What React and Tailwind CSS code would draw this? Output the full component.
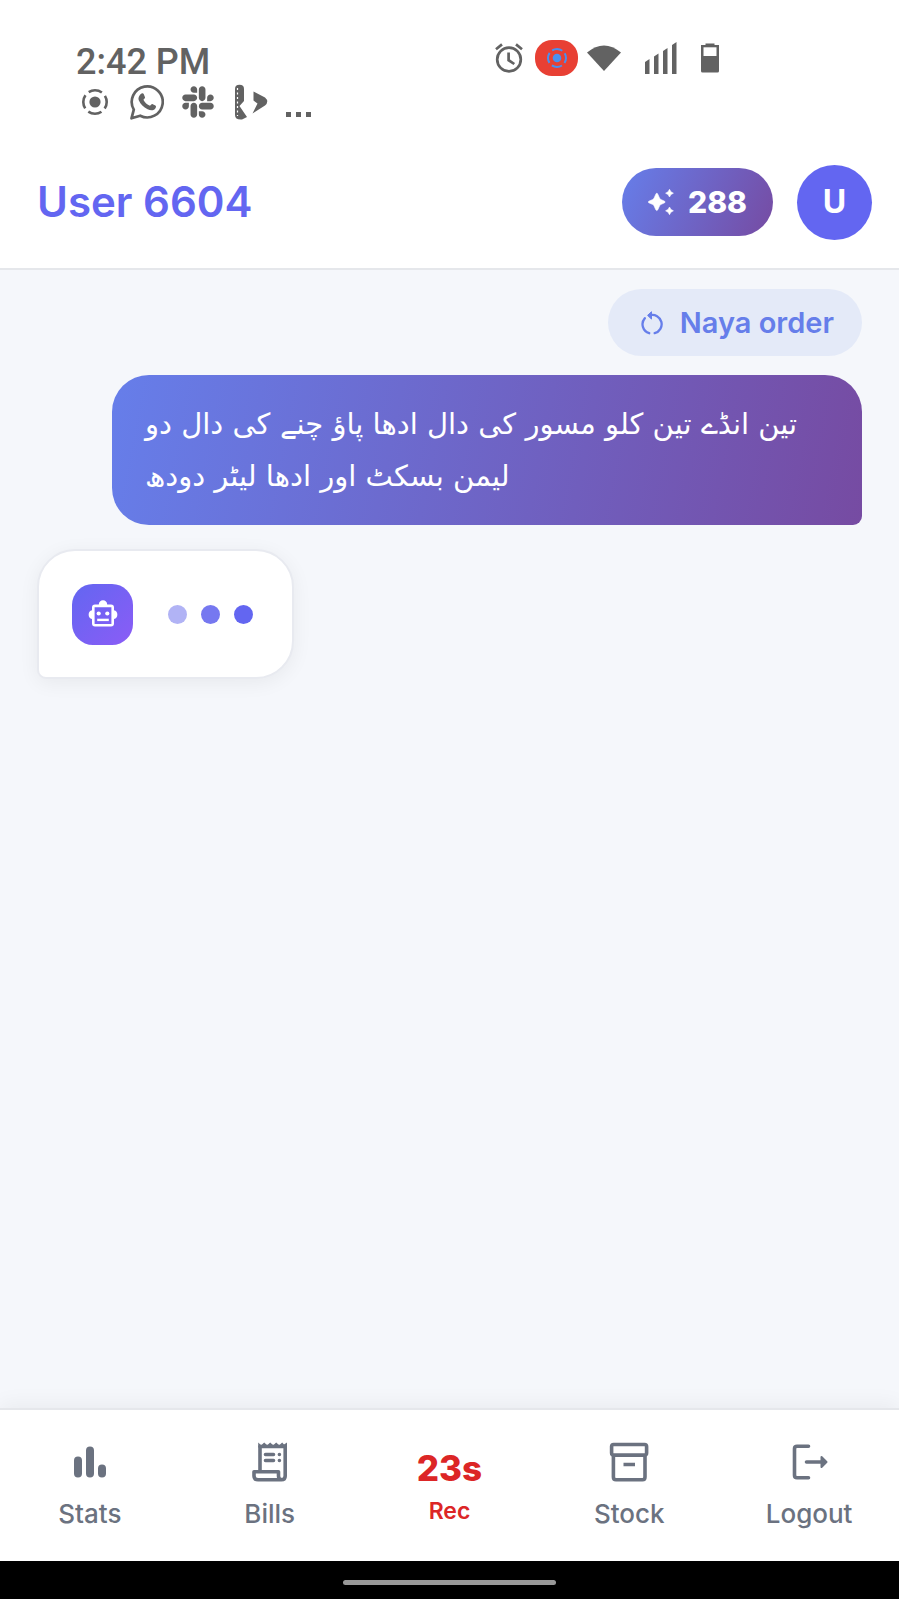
import React from "react";
import { FaSlack } from "react-icons/fa";

function RecordIcon({ className }) {
  return (
    <svg viewBox="0 0 26 26" className={className} fill="none" stroke="currentColor" strokeWidth="2.6" aria-hidden="true">
      <circle cx="13" cy="13" r="5.6" fill="currentColor" stroke="none" />
      <circle cx="13" cy="13" r="11.7" strokeDasharray="13.9 4.478" strokeDashoffset="6.95" />
    </svg>
  );
}

function WhatsappIcon() {
  return (
    <svg viewBox="0 0 34 36" className="h-9 w-[34px]" aria-hidden="true">
      <path d="M1.500 34.300 L3.800 25.600 A15.500 15.500 0 1 1 10.200 31.700 Z" fill="none" stroke="currentColor" strokeWidth="2.700" strokeLinejoin="round" />
      <path d="M11.300 9.800 C12.200 9 13.300 9.200 13.700 10.100 L15 13.200 C15.300 14 14 15 13.400 15.700 C14.900 18.600 17.100 20.600 20 21.800 C20.800 21 21.600 19.700 22.300 20 L25.400 21.500 C26.600 22.100 25.900 24 25 25 C23.300 26.800 20.400 26.600 17.600 25.300 C13.500 23.500 10.600 20.300 8.900 16.600 C7.800 14 9.200 11.300 11.300 9.800 Z" fill="currentColor" />
    </svg>
  );
}

function RulerPlayIcon() {
  return (
    <svg viewBox="0 0 34 36" className="h-9 w-[34px]" fill="currentColor" aria-hidden="true">
      <path d="M1 5 Q1 0.800 5.500 0.800 Q10 0.800 10 5 V17 L5.500 22 L13 33 L8 35.500 Q1 36 1 31 Z" />
      <path d="M3.500 4 V32" stroke="#fff" strokeWidth="1.200" strokeDasharray="2 2.500" />
      <path d="M19.500 7.500 L31 13.500 Q35.500 17.500 31 21.500 L18.500 29.500 L23.500 19.500 L19.500 16.500 Z" />
    </svg>
  );
}

function AlarmIcon() {
  return (
    <svg viewBox="0 0 28 30" className="h-[30px] w-7" fill="none" stroke="currentColor" strokeWidth="2.700" aria-hidden="true">
      <circle cx="14" cy="16.500" r="11.800" />
      <path d="M13.600 9.500 V17.200 L19.300 21 M1 6.200 L7 1.400 M27 6.200 L21 1.400" />
    </svg>
  );
}

function WifiIcon() {
  return (
    <svg viewBox="0 0 34 26" className="h-[26px] w-[34px]" fill="currentColor" aria-hidden="true">
      <path d="M0 7.500 Q17 -6.500 34 7.500 L17 26 Z" />
    </svg>
  );
}

function SignalIcon() {
  return (
    <svg viewBox="0 0 32 32" className="size-8" fill="currentColor" aria-hidden="true">
      <path d="M0 20 l4.500 -3 V32 H0 Z M9 14.500 l4.500 -3 V32 H9 Z M18 9 l4.500 -3 V32 H18 Z M27 3 l4.500 -3 V32 H27 Z" />
    </svg>
  );
}

function BatteryIcon() {
  return (
    <svg viewBox="0 0 18 30" className="h-[30px] w-[18px]" aria-hidden="true">
      <path d="M4.500 0.500 H13.500 V2 H18 V28 Q18 29.500 16.500 29.500 H1.500 Q0 29.500 0 28 V2 H4.500 Z" fill="currentColor" />
      <path d="M2.500 4.300 H15.500 V13 H2.500 Z" fill="#fff" />
    </svg>
  );
}

function SparklesIcon() {
  return (
    <svg viewBox="0 0 26 26" className="size-[26px]" fill="currentColor" aria-hidden="true">
      <path d="M8.800 4.300 Q9.500 4.300 9.800 5.200 L11.500 9.100 Q11.900 10.100 12.800 10.500 L16.600 12.200 Q17.600 13 16.600 13.800 L12.800 15.500 Q11.900 15.900 11.500 16.900 L9.800 20.800 Q8.800 22.300 7.800 20.800 L6.100 16.900 Q5.700 15.900 4.800 15.500 L0.800 13.800 Q-0.200 13 0.800 12.200 L4.800 10.500 Q5.700 10.100 6.100 9.100 L7.800 5.200 Q8.100 4.300 8.800 4.300 Z" stroke="currentColor" strokeWidth="0.600" />
      <path d="M21.500 0.300 L22.900 2.800 L25.400 4.200 L22.900 5.600 L21.500 8 L20.100 5.600 L17.600 4.200 L20.100 2.800 Z M21.500 18 L22.900 20.400 L25.400 21.800 L22.900 23.200 L21.500 25.700 L20.100 23.200 L17.600 21.800 L20.100 20.400 Z" stroke="currentColor" strokeWidth="0.600" strokeLinejoin="round" />
    </svg>
  );
}

function RestartIcon() {
  return (
    <svg viewBox="0 0 22 24" className="h-6 w-[22px]" fill="none" stroke="currentColor" strokeWidth="2.300" strokeLinecap="round" aria-hidden="true">
      <path d="M9 4.200 A9.300 9.300 0 0 1 13.700 22.200" />
      <path d="M3.800 7.200 A9.300 9.300 0 0 0 8.200 22.200" />
      <path d="M10.200 1 L6.600 4.400 L10.200 7.800 Z" fill="currentColor" strokeWidth="1" strokeLinejoin="round" />
    </svg>
  );
}

function RobotIcon() {
  return (
    <svg viewBox="0 0 32 28" className="h-7 w-8" fill="currentColor" aria-hidden="true">
      <path fillRule="evenodd" d="M8 4.500 H11.800 A4.200 4.200 0 0 1 20.200 4.500 H24 Q27 4.500 27 7.500 V10.300 A4.500 4.500 0 0 1 27 19 V23.500 Q27 26.500 24 26.500 H8 Q5 26.500 5 23.500 V19 A4.500 4.500 0 0 1 5 10.300 V7.500 Q5 4.500 8 4.500 Z M7.600 7.200 V23.900 H24.400 V7.200 Z" />
      <circle cx="11.700" cy="13.500" r="2.100" />
      <circle cx="20.300" cy="13.500" r="2.100" />
      <path d="M10.200 18.700 H21.800 V21.100 H10.200 Z" />
    </svg>
  );
}

function StatsIcon() {
  return (
    <svg viewBox="0 0 40 40" className="size-10" fill="none" stroke="currentColor" strokeWidth="8" strokeLinecap="round" aria-hidden="true">
      <path d="M8 18.500 V31.500 M20 8.500 V31.500 M32 26.500 V31.500" />
    </svg>
  );
}

function BillsIcon() {
  return (
    <svg viewBox="0 0 40 40" className="size-10" fill="none" stroke="currentColor" strokeWidth="3.600" aria-hidden="true">
      <path d="M10 28 V4.500 H35.200 V34 Q35.200 37.800 31.400 37.800 H8 Q4 37.800 4 34 V29.800 H28.500 V34 Q28.500 37.800 32 37.800" strokeLinejoin="round" />
      <path d="M8.200 0.600 L11.200 3.200 L14.200 0.600 L17.200 3.200 L20.200 0.600 L23.200 3.200 L26.200 0.600 L29.200 3.200 L32.200 0.600 L34 2.400 L37 0.600 V5.500 H8.200 Z" fill="currentColor" stroke="none" />
      <path d="M15.500 12.500 H23.500 M15.500 18.500 H23.500 M29.400 12.500 H29.410 M29.400 18.500 H29.410" strokeLinecap="round" />
    </svg>
  );
}

function StockIcon() {
  return (
    <svg viewBox="0 0 40 40" className="size-10" fill="none" stroke="currentColor" strokeWidth="3.600" aria-hidden="true">
      <rect x="2.600" y="2.500" width="35" height="10.600" rx="2" />
      <path d="M4.400 13 V35 Q4.400 37.800 7 37.800 H33.500 Q36 37.800 36 35 V13 M14.500 22.500 H26" />
    </svg>
  );
}

function LogoutIcon() {
  return (
    <svg viewBox="0 0 40 40" className="size-10" fill="none" stroke="currentColor" strokeWidth="3.600" strokeLinecap="round" aria-hidden="true">
      <path d="M19.500 4.200 H8 Q5.500 4.200 5.500 6.700 V33.300 Q5.500 35.800 8 35.800 H19.500 M17.500 20 H34" />
      <path d="M32.500 15 L37.500 20 L32.500 25 Z" fill="currentColor" strokeWidth="2" strokeLinejoin="round" />
    </svg>
  );
}

const tabs = [
  { label: "Stats", Icon: StatsIcon },
  { label: "Bills", Icon: BillsIcon },
  { label: "Rec", timer: "23s" },
  { label: "Stock", Icon: StockIcon },
  { label: "Logout", Icon: LogoutIcon },
];

function StatusBar() {
  return (
    <div className="flex h-[140px] items-start justify-between pt-10 pr-[180px] pl-[76px] font-['Roboto',sans-serif] text-[#626262]">
      <div className="flex flex-col">
        <div className="text-[36px] leading-[44px] font-medium">
          2:42 <span>PM</span>
        </div>
        <div className="flex items-center">
          <RecordIcon className="mx-1.5 size-[26px]" />
          <div className="ml-4">
            <WhatsappIcon />
          </div>
          <FaSlack className="ml-4 size-9" aria-hidden="true" />
          <div className="ml-[18px]">
            <RulerPlayIcon />
          </div>
          <div className="ml-[18px] flex gap-[5px] self-end pb-[3px]">
            <span className="size-[5px] bg-current" />
            <span className="size-[5px] bg-current" />
            <span className="size-[5px] bg-current" />
          </div>
        </div>
      </div>
      <div className="flex h-9 items-center">
        <AlarmIcon />
        <span className="ml-3 flex h-9 w-[43px] items-center justify-center rounded-[17px] bg-[#e84034] text-[#4a90f0]">
          <RecordIcon className="size-5" />
        </span>
        <div className="ml-[9px]">
          <WifiIcon />
        </div>
        <div className="ml-6">
          <SignalIcon />
        </div>
        <div className="ml-6">
          <BatteryIcon />
        </div>
      </div>
    </div>
  );
}

export default function App() {
  return (
    <div className="flex min-h-screen flex-col bg-[#f5f7fb] font-['Inter',sans-serif]">
      <div className="border-b-2 border-[#e5e7eb] bg-white">
        <StatusBar />
        <header className="flex h-32 items-center justify-between pr-[27px] pb-1 pl-[37px]">
          <h1 className="text-[42px] leading-[52px] font-semibold text-[#6366f1]">User 6604</h1>
          <div className="flex items-center gap-6">
            <button className="flex h-[68px] items-center gap-3.5 rounded-full bg-[linear-gradient(114deg,#667eea,#764ba2)] px-[26px] text-[30px] font-extrabold text-white">
              <SparklesIcon />
              288
            </button>
            <button className="flex size-[75px] items-center justify-center rounded-full bg-[#6366f1] text-[32px] font-bold text-white">U</button>
          </div>
        </header>
      </div>

      <main className="flex flex-1 flex-col px-[37px] pt-[19px]">
        <button className="flex h-[67px] items-center gap-[17px] self-end rounded-full bg-[#e4eaf8] pr-7 pl-[33px] text-[29px] font-semibold text-[#667eea]">
          <RestartIcon />
          Naya order
        </button>

        <p
          lang="ur"
          className="mt-[19px] ml-[75px] rounded-[37px] rounded-br-[9px] bg-[linear-gradient(101deg,#667eea,#764ba2)] px-[33px] py-[23px] text-left font-['DejaVu_Sans',sans-serif] text-[29px] leading-[52px] text-white"
          dir="rtl"
        >
          تین انڈے تین کلو مسور کی دال ادھا پاؤ چنے کی دال دو لیمن بسکٹ اور ادھا لیٹر دودھ
        </p>

        <div className="mt-6 flex h-[130px] items-center gap-[35px] self-start rounded-[38px] rounded-bl-[9px] border-2 border-[#e8eaf0] bg-white pr-[39px] pl-[33px] shadow-[0_4px_20px_rgba(0,0,0,0.06)]">
          <div className="flex size-[61px] items-center justify-center rounded-[21px] bg-[linear-gradient(135deg,#6366f1,#8b5cf6)] text-white">
            <RobotIcon />
          </div>
          <div className="flex gap-3.5">
            <span className="size-[19px] rounded-full bg-[#b1b3f5]" />
            <span className="size-[19px] rounded-full bg-[#7678f0]" />
            <span className="size-[19px] rounded-full bg-[#6366f1]" />
          </div>
        </div>
      </main>

      <nav className="grid h-[153px] grid-cols-5 border-t-2 border-[#e5e7eb] bg-white shadow-[0_-4px_20px_rgba(0,0,0,0.05)]">
        {tabs.map(({ label, Icon, timer }) =>
          timer ? (
            <button key={label} className="flex flex-col items-center pt-9 text-[#dc2626]">
              <span className="text-[35px] leading-[44px] font-extrabold">{timer}</span>
              <span className="text-[23px] leading-[42px] font-semibold">{label}</span>
            </button>
          ) : (
            <button key={label} className="flex flex-col items-center gap-3.5 pt-8 text-[#6b7280]">
              <Icon />
              <span className="text-[26px] leading-9 font-medium">{label}</span>
            </button>
          ),
        )}
      </nav>
      <div className="flex h-[38px] items-center justify-center bg-black pt-1">
        <span className="h-[5px] w-[213px] rounded-full bg-[#999]" />
      </div>
    </div>
  );
}
